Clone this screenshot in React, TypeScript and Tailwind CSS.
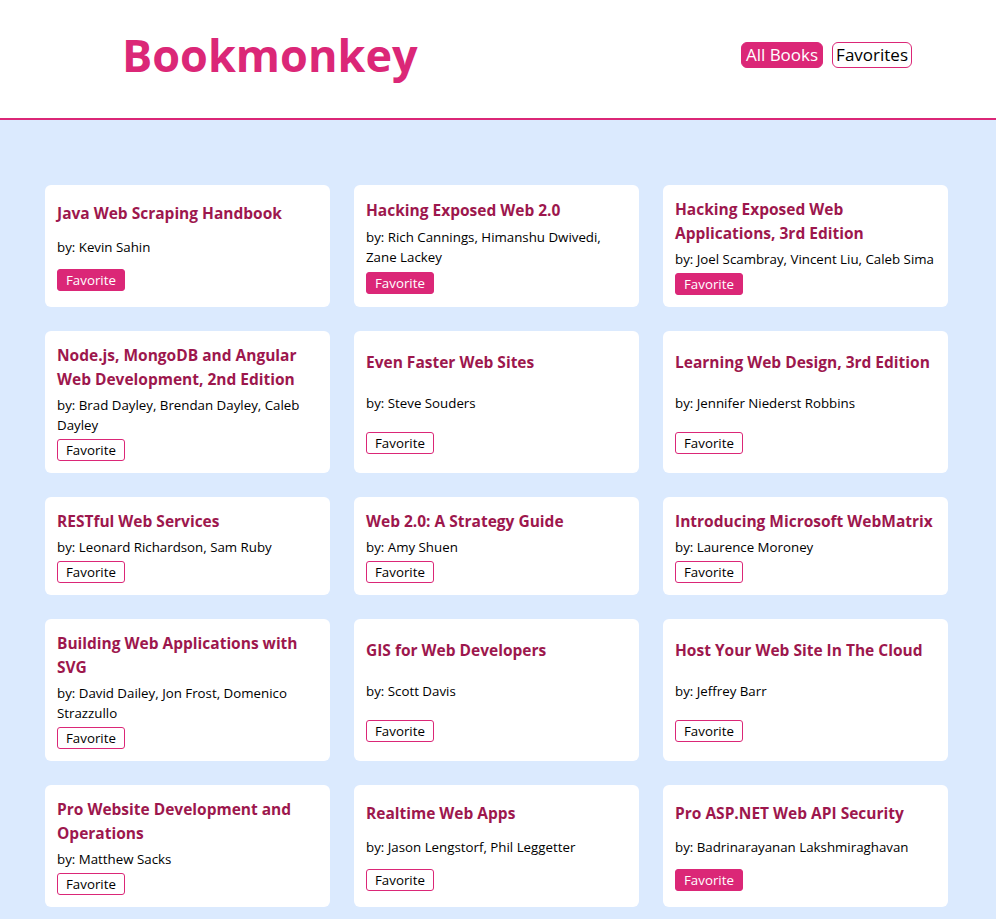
import React from "react";

type Book = { title: string; authors: string; fav: boolean };

const books: Book[] = [
  { title: "Java Web Scraping Handbook", authors: "Kevin Sahin", fav: true },
  { title: "Hacking Exposed Web 2.0", authors: "Rich Cannings, Himanshu Dwivedi, Zane Lackey", fav: true },
  { title: "Hacking Exposed Web Applications, 3rd Edition", authors: "Joel Scambray, Vincent Liu, Caleb Sima", fav: true },
  { title: "Node.js, MongoDB and Angular Web Development, 2nd Edition", authors: "Brad Dayley, Brendan Dayley, Caleb Dayley", fav: false },
  { title: "Even Faster Web Sites", authors: "Steve Souders", fav: false },
  { title: "Learning Web Design, 3rd Edition", authors: "Jennifer Niederst Robbins", fav: false },
  { title: "RESTful Web Services", authors: "Leonard Richardson, Sam Ruby", fav: false },
  { title: "Web 2.0: A Strategy Guide", authors: "Amy Shuen", fav: false },
  { title: "Introducing Microsoft WebMatrix", authors: "Laurence Moroney", fav: false },
  { title: "Building Web Applications with SVG", authors: "David Dailey, Jon Frost, Domenico Strazzullo", fav: false },
  { title: "GIS for Web Developers", authors: "Scott Davis", fav: false },
  { title: "Host Your Web Site In The Cloud", authors: "Jeffrey Barr", fav: false },
  { title: "Pro Website Development and Operations", authors: "Matthew Sacks", fav: false },
  { title: "Realtime Web Apps", authors: "Jason Lengstorf, Phil Leggetter", fav: false },
  { title: "Pro ASP.NET Web API Security", authors: "Badrinarayanan Lakshmiraghavan", fav: true },
];

function Card({ book }: { book: Book }) {
  return (
    <div className="grid gap-1 items-center justify-items-start p-3 bg-white rounded-md">
      <h2 className="text-[15.5px] leading-6 font-bold text-[#9d174d]">{book.title}</h2>
      <p className="text-[13.3px] leading-5 text-black">by: {book.authors}</p>
      {book.fav ? (
        <button className="text-[13.3px] leading-[20px] px-[8px] border border-[#db2777] bg-[#db2777] text-white rounded-[3px]">
          Favorite
        </button>
      ) : (
        <button className="text-[13.3px] leading-[20px] px-[8px] border border-[#db2777] bg-white text-black rounded-[3px]">
          Favorite
        </button>
      )}
    </div>
  );
}

export default function App() {
  return (
    <div className="min-h-screen bg-[#dbeafe]" style={{ fontFamily: '"Open Sans", "Noto Sans", sans-serif' }}>
      <header className="h-[120px] bg-white border-b-2 border-[#db2777] flex items-center justify-between pl-[122px] pr-[84px]">
        <h1 className="text-[45px] leading-[56px] font-bold text-[#db2777] -mt-[8px]">Bookmonkey</h1>
        <nav className="flex gap-[9px] -mt-[9px]">
          <button className="text-[17px] leading-[24px] px-[4px] border border-[#db2777] bg-[#db2777] text-white rounded-md">
            All Books
          </button>
          <button className="text-[17px] leading-[24px] px-[3px] border border-[#db2777] bg-white text-black rounded-md">
            Favorites
          </button>
        </nav>
      </header>
      <main className="pt-[65px] pb-[48px] pl-[45px]">
        <div className="grid grid-cols-3 gap-6 w-[903px]">
          {books.map((b) => (
            <Card key={b.title} book={b} />
          ))}
        </div>
      </main>
    </div>
  );
}
